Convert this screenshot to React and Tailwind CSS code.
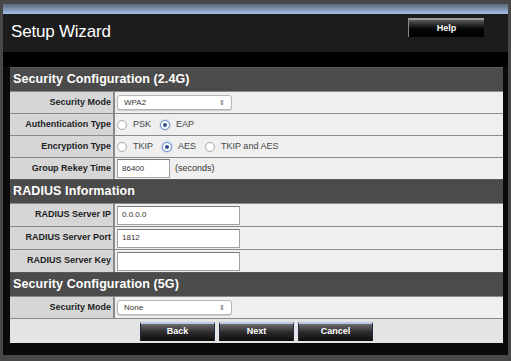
import React from 'react';

const font = { fontFamily: '"Liberation Sans", Arial, sans-serif' };

const SectionHeader = ({ title }) => (
  <div className="h-[24px] flex items-center pl-[3px] bg-[#4b4b4b] border-t border-[#5a5a5a] text-white font-bold text-[12.5px] tracking-[0.1px]">
    {title}
  </div>
);

const Row = ({ label, height = 'h-[22px]', children }) => (
  <div className={`${height} flex border-t border-[#8a8a8a]`}>
    <div className="w-[105px] shrink-0 flex items-center justify-end pr-[2px] bg-[#d6d6d6] text-[9px] font-bold text-[#1e1e1e] border-r-2 border-[#8a8a8a]">
      {label}
    </div>
    <div className="flex-1 flex items-center pl-[2px] bg-[#efefef] text-[9px] text-[#333]">
      {children}
    </div>
  </div>
);

const Select = ({ value }) => (
  <div className="w-[115px] h-[15px] flex items-center justify-between px-[6px] bg-white border border-[#b5b5b5] rounded-[3px] shadow-[0_1px_1px_rgba(0,0,0,0.15)] text-[8px] text-[#333]">
    <span>{value}</span>
    <span className="text-[7px] leading-none text-[#555]">⇕</span>
  </div>
);

const Radio = ({ label, checked }) => (
  <div className="flex items-center mr-[9px]">
    <span
      className={`w-[10px] h-[10px] rounded-full border flex items-center justify-center bg-white ${
        checked ? 'border-[#6f8fcf] shadow-[0_0_2px_#7fa3e6]' : 'border-[#a8a8a8]'
      }`}
    >
      {checked && <span className="w-[4px] h-[4px] rounded-full bg-[#2c4f8f]" />}
    </span>
    <span className="ml-[6px] text-[9px] text-[#444]">{label}</span>
  </div>
);

const Input = ({ value = '', width }) => (
  <div className={`${width} h-[19px] flex items-center pl-[4px] bg-white border border-[#a0a0a0] border-t-[#7a7a7a] text-[8px] text-[#333]`}>
    {value}
  </div>
);

const Button = ({ label }) => (
  <div className="w-[75px] h-[19px] flex items-center justify-center border-t-2 border-[#b9c9e6] border-x border-x-[#1d2a44] bg-gradient-to-b from-[#6e6e6e] via-[#2a2a2a] to-[#0e0e0e] text-white font-bold text-[9px]">
    {label}
  </div>
);

export default function App() {
  return (
    <div style={font} className="w-[511px] h-[361px] bg-[#484848] px-[3px] pt-[4px] overflow-hidden">
      <div className="h-[351px] bg-[#0a0a0a] flex flex-col">
        <div className="h-[10px] bg-gradient-to-b from-[#5c6677] to-[#a6c1ec]" />
        <div className="h-[38px] bg-[#1c1c1c] flex items-start justify-between pl-[8px] pr-[24px]">
          <div className="text-white text-[17px] mt-[5px] tracking-[-0.2px]">Setup Wizard</div>
          <div className="mt-[4px] w-[76px] h-[19px] flex items-center justify-center border-t-2 border-[#9a9a9a] border-l border-l-[#8a8a8a] bg-gradient-to-b from-[#5a5a5a] via-[#0a0a0a] to-black text-white font-bold text-[9px]">
            Help
          </div>
        </div>
        <div className="h-[15px] bg-black" />
        <div className="ml-[7px] mr-[5px] flex flex-col">
          <SectionHeader title="Security Configuration (2.4G)" />
          <Row label="Security Mode">
            <Select value="WPA2" />
          </Row>
          <Row label="Authentication Type">
            <Radio label="PSK" />
            <Radio label="EAP" checked />
          </Row>
          <Row label="Encryption Type">
            <Radio label="TKIP" />
            <Radio label="AES" checked />
            <Radio label="TKIP and AES" />
          </Row>
          <Row label="Group Rekey Time">
            <Input value="86400" width="w-[53px]" />
            <span className="ml-[5px] text-[9px] text-[#333]">(seconds)</span>
          </Row>
          <SectionHeader title="RADIUS Information" />
          <Row label="RADIUS Server IP" height="h-[23px]">
            <Input value="0.0.0.0" width="w-[123px]" />
          </Row>
          <Row label="RADIUS Server Port" height="h-[23px]">
            <Input value="1812" width="w-[123px]" />
          </Row>
          <Row label="RADIUS Server Key" height="h-[23px]">
            <Input width="w-[123px]" />
          </Row>
          <SectionHeader title="Security Configuration (5G)" />
          <Row label="Security Mode">
            <Select value="None" />
          </Row>
          <div className="h-[25px] flex items-center justify-center gap-[4px] bg-[#e4e4e4] border-t border-[#8a8a8a]">
            <Button label="Back" />
            <Button label="Next" />
            <Button label="Cancel" />
          </div>
        </div>
      </div>
    </div>
  );
}
